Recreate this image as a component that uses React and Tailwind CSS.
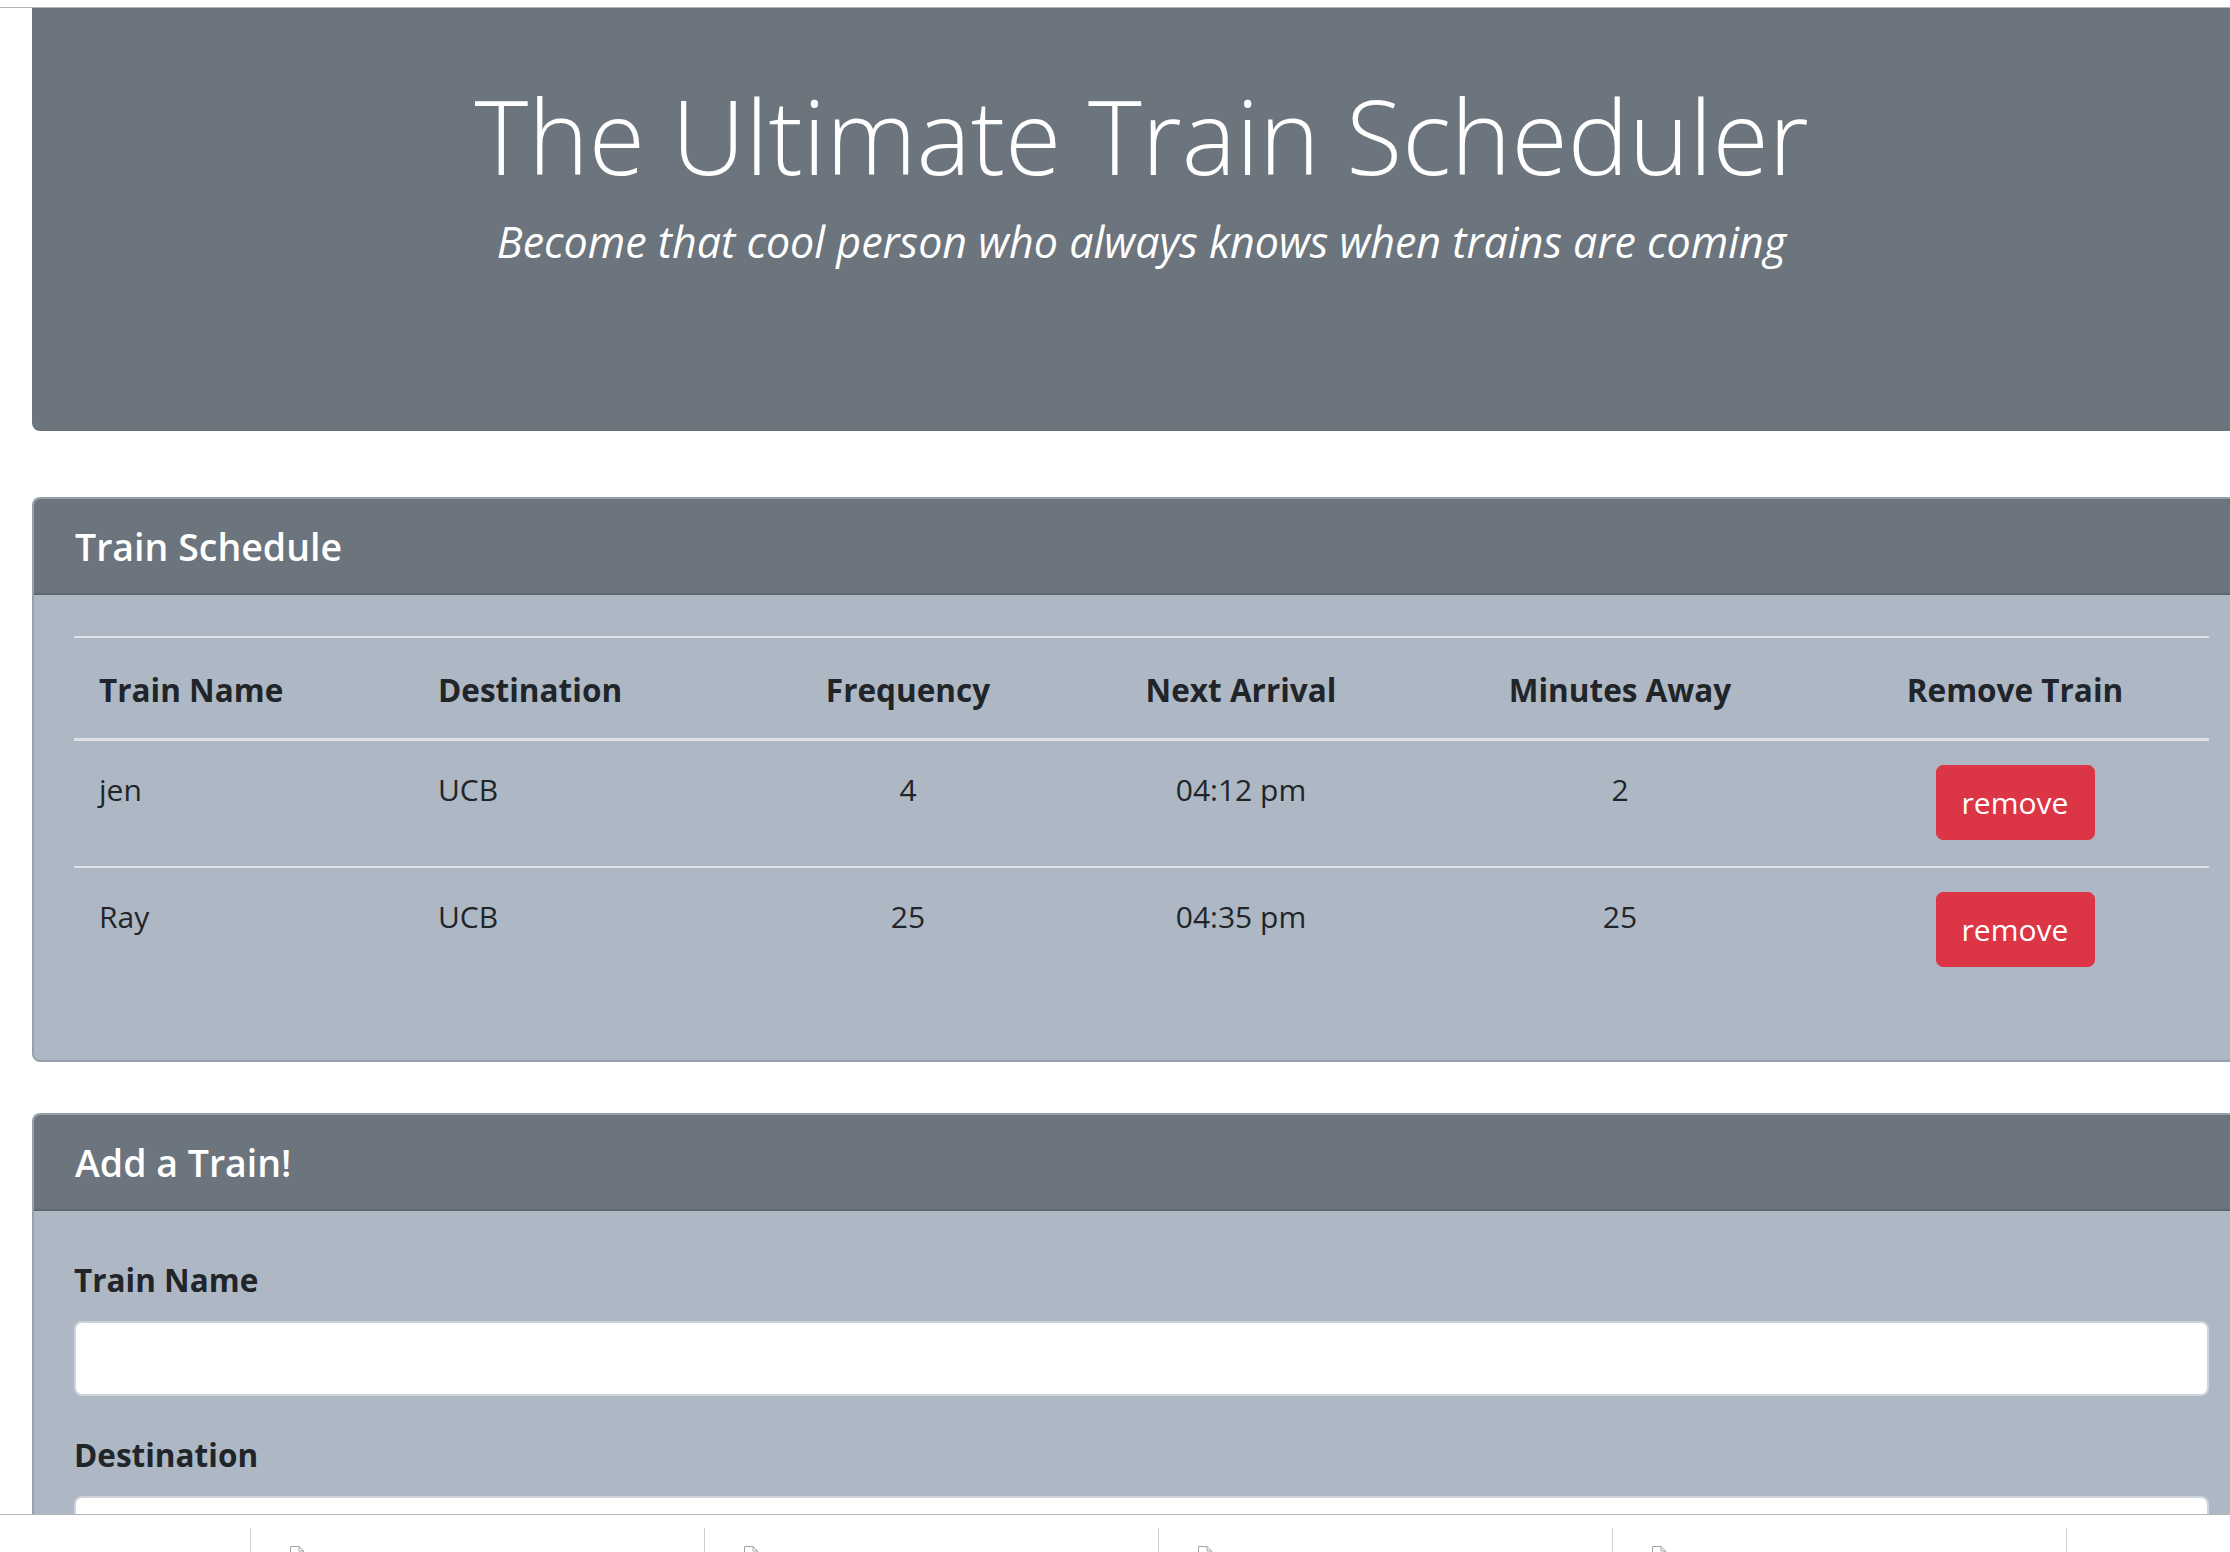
import React from "react";

const trains = [
  { name: "jen", destination: "UCB", frequency: "4", next: "04:12 pm", away: "2" },
  { name: "Ray", destination: "UCB", frequency: "25", next: "04:35 pm", away: "25" },
];

const FileIcon = () => (
  <svg width="14" height="18" viewBox="0 0 14 18" fill="none">
    <path d="M0.5 0.5 H9 L13.5 5 V17.5 H0.5 Z" stroke="#a3a3a3" strokeWidth="1" />
    <path d="M9 0.5 V5 H13.5" stroke="#a3a3a3" strokeWidth="1" />
  </svg>
);

const Card = ({ title, bodyClass, children }) => (
  <div className="rounded-[8px] border-2 border-black/[0.125] bg-[#adb8c4] overflow-hidden">
    <div className="bg-[#6c757d] border-b-2 border-black/[0.125] px-[41px] pt-[25px] pb-[23px]">
      <h5 className="text-[37.5px] leading-[46px] font-semibold text-white">{title}</h5>
    </div>
    <div className={bodyClass}>{children}</div>
  </div>
);

const App = () => {
  return (
    <div className="w-[2230px] h-[1552px] overflow-hidden flex flex-col bg-white font-['Open_Sans',sans-serif] text-[#212529]">
      <div className="h-[7px] shrink-0" />
      <div className="h-px shrink-0 bg-[#b2b2b2]" />

      <div className="flex-1 overflow-hidden">
        <div className="ml-[32px] w-[2219px]">
          {/* jumbotron */}
          <div className="h-[423px] bg-[#6c757d] rounded-b-[8px] pt-[67px] text-center text-white">
            <h1 className="text-[102.5px] leading-[120px] font-light">The Ultimate Train Scheduler</h1>
            <p className="mt-[15px] text-[43px] leading-[63px] italic">
              Become that cool person who always knows when trains are coming
            </p>
          </div>

          <div className="mt-[66px]">
            <Card title="Train Schedule" bodyClass="px-[40px] pt-[41px] pb-[67px]">
              <table className="w-full table-fixed border-collapse text-[30px] leading-[50px]">
                <colgroup>
                  <col className="w-[339px]" />
                  <col className="w-[340px]" />
                  <col className="w-[310px]" />
                  <col className="w-[356px]" />
                  <col className="w-[402px]" />
                  <col className="w-[388px]" />
                </colgroup>
                <thead className="text-[31.5px]">
                  <tr className="border-t-2 border-b-[3px] border-[#dee2e6]">
                    <th className="px-[25px] pt-[27px] pb-[23px] text-left font-bold">Train Name</th>
                    <th className="px-[25px] pt-[27px] pb-[23px] text-left font-bold">Destination</th>
                    <th className="px-[25px] pt-[27px] pb-[23px] text-center font-bold">Frequency</th>
                    <th className="px-[25px] pt-[27px] pb-[23px] text-center font-bold">Next Arrival</th>
                    <th className="px-[25px] pt-[27px] pb-[23px] text-center font-bold">Minutes Away</th>
                    <th className="px-[25px] pt-[27px] pb-[23px] text-center font-bold">Remove Train</th>
                  </tr>
                </thead>
                <tbody>
                  {trains.map((t, i) => (
                    <tr key={t.name} className={i > 0 ? "border-t-2 border-[#dee2e6]" : ""}>
                      <td className="px-[25px] pt-[24px] pb-[26px] align-top">{t.name}</td>
                      <td className="px-[25px] pt-[24px] pb-[26px] align-top">{t.destination}</td>
                      <td className="px-[25px] pt-[24px] pb-[26px] align-top text-center">{t.frequency}</td>
                      <td className="px-[25px] pt-[24px] pb-[26px] align-top text-center">{t.next}</td>
                      <td className="px-[25px] pt-[24px] pb-[26px] align-top text-center">{t.away}</td>
                      <td className="px-[25px] pt-[24px] pb-[26px] align-top text-center">
                        <button className="h-[75px] w-[159px] rounded-[7px] border border-[#dc3545] bg-[#dc3545] text-white text-[30px] leading-[50px]">
                          remove
                        </button>
                      </td>
                    </tr>
                  ))}
                </tbody>
              </table>
            </Card>
          </div>

          <div className="mt-[51px]">
            <Card title="Add a Train!" bodyClass="px-[40px] pt-[44px] pb-[41px]">
              <label className="block text-[31.5px] leading-[50px] font-bold mb-[16px]">Train Name</label>
              <input className="block w-full h-[75px] bg-white border-2 border-[#ced4da] rounded-[8px] mb-[34px]" />
              <label className="block text-[31.5px] leading-[50px] font-bold mb-[16px]">Destination</label>
              <input className="block w-full h-[75px] bg-white border-2 border-[#ced4da] rounded-[8px] mb-[34px]" />
            </Card>
          </div>
        </div>
      </div>

      {/* downloads shelf */}
      <div className="h-[38px] shrink-0 border-t border-[#b4b4b4] bg-white flex pl-[250px]">
        {[0, 1, 2, 3].map((i) => (
          <div key={i} className="w-[454px] mt-[13px] border-l border-[#cfcfcf] pl-[39px] pt-[18px]">
            <FileIcon />
          </div>
        ))}
        <div className="mt-[13px] border-l border-[#cfcfcf]" />
      </div>
    </div>
  );
};

export default App;
